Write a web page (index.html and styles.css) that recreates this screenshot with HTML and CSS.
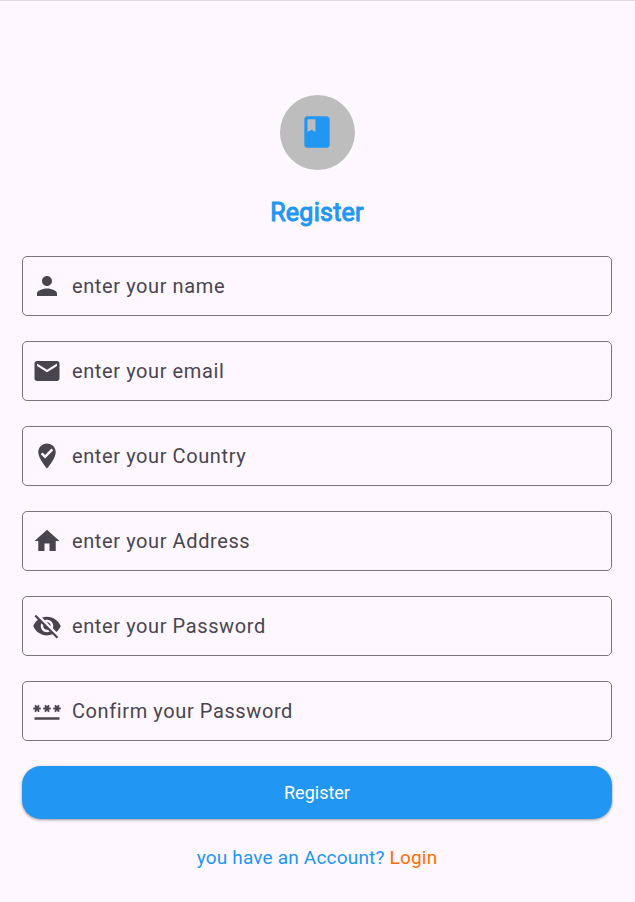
FILE: index.html
```html
<!DOCTYPE html>
<html lang="en">
<head>
<meta charset="utf-8">
<meta name="viewport" content="width=device-width, initial-scale=1">
<title>Register</title>
<link rel="stylesheet" href="styles.css">
</head>
<body>
<main class="page">
  <div class="logo">
    <svg viewBox="0 0 24 24" aria-hidden="true"><path d="M18 2H6c-1.100 0-2 .9-2 2v16c0 1.100.9 2 2 2h12c1.100 0 2-.9 2-2V4c0-1.100-.9-2-2-2zM6 4h5v8l-2.500-1.500L6 12V4z"/></svg>
  </div>
  <h1 class="title">Register</h1>
  <form class="form">
    <label class="field">
      <svg class="icon" viewBox="0 0 24 24" aria-hidden="true"><path d="M12 12c2.210 0 4-1.790 4-4s-1.790-4-4-4-4 1.790-4 4 1.790 4 4 4zm0 2c-2.670 0-8 1.340-8 4v2h16v-2c0-2.660-5.330-4-8-4z"/></svg>
      <input class="input" type="text" aria-label="Name" placeholder="enter your name">
    </label>
    <label class="field">
      <svg class="icon" viewBox="0 0 24 24" aria-hidden="true"><path d="M20 4H4c-1.100 0-1.990.9-1.990 2L2 18c0 1.100.9 2 2 2h16c1.100 0 2-.9 2-2V6c0-1.100-.9-2-2-2zm0 4l-8 5-8-5V6l8 5 8-5v2z"/></svg>
      <input class="input" type="email" aria-label="Email" placeholder="enter your email">
    </label>
    <label class="field">
      <svg class="icon" viewBox="0 0 24 24" aria-hidden="true"><path d="M12 2C8.140 2 5 5.140 5 9c0 5.250 7 13 7 13s7-7.750 7-13c0-3.860-3.140-7-7-7zm-1.530 12l-3.480-3.480 1.410-1.410 2.070 2.060 5.130-5.140 1.410 1.420L10.470 14z"/></svg>
      <input class="input" type="text" aria-label="Country" placeholder="enter your Country">
    </label>
    <label class="field">
      <svg class="icon" viewBox="0 0 24 24" aria-hidden="true"><path d="M10 20v-6h4v6h5v-8h3L12 3 2 12h3v8z"/></svg>
      <input class="input" type="text" aria-label="Address" placeholder="enter your Address">
    </label>
    <label class="field">
      <svg class="icon" viewBox="0 0 24 24" aria-hidden="true"><path d="M12 7c2.760 0 5 2.240 5 5 0 .65-.13 1.260-.36 1.830l2.920 2.920c1.510-1.260 2.700-2.890 3.430-4.750-1.730-4.390-6-7.500-11-7.500-1.400 0-2.740.25-3.980.7l2.160 2.160C10.740 7.130 11.350 7 12 7zM2 4.270l2.280 2.280.46.46C3.080 8.300 1.780 10.020 1 12c1.730 4.390 6 7.500 11 7.500 1.550 0 3.030-.3 4.380-.84l.42.42L19.730 22 21 20.730 3.270 3 2 4.270zM7.530 9.800l1.550 1.550c-.05.21-.08.43-.08.65 0 1.660 1.340 3 3 3 .22 0 .44-.03.65-.08l1.550 1.550c-.67.33-1.410.53-2.200.53-2.760 0-5-2.240-5-5 0-.79.2-1.530.53-2.200zm4.310-.78l3.150 3.150.02-.16c0-1.660-1.340-3-3-3l-.17.01z"/></svg>
      <input class="input" type="password" aria-label="Password" placeholder="enter your Password">
    </label>
    <label class="field">
      <svg class="icon" viewBox="0 0 24 24" aria-hidden="true"><path d="M2 17h20v2H2v-2zm1.150-4.050L4 11.470l.85 1.480 1.300-.75-.85-1.480H7v-1.500H5.300l.85-1.470L4.850 7 4 8.470 3.150 7l-1.300.75.85 1.470H1v1.500h1.700l-.85 1.480 1.300.75zm6.700-.75l1.300.75.85-1.480.85 1.480 1.300-.75-.85-1.480H15v-1.500h-1.700l.85-1.470-1.300-.75L12 8.470 11.150 7l-1.300.75.85 1.470H9v1.500h1.700l-.85 1.480zM23 9.220h-1.700l.85-1.470-1.300-.75L20 8.470 19.150 7l-1.300.75.85 1.470H17v1.500h1.700l-.85 1.480 1.300.75.85-1.480.85 1.480 1.300-.75-.85-1.480H23v-1.500z"/></svg>
      <input class="input" type="password" aria-label="Confirm password" placeholder="Confirm your Password">
    </label>
    <button class="submit" type="submit">Register</button>
  </form>
  <p class="footer">you have an Account? <a class="login" href="#login">Login</a></p>
</main>
</body>
</html>
```
FILE: styles.css
```css
* { box-sizing: border-box; }

body {
  margin: 0;
  background: #fef7ff;
  font-family: Roboto, sans-serif;
}

.page {
  display: flex;
  flex-direction: column;
  align-items: center;
  padding: 94px 23px 24px 22px;
  border-top: 1px solid #dedae0;
}

.logo {
  display: grid;
  place-items: center;
  width: 75px;
  height: 75px;
  padding-bottom: 1px;
  border-radius: 50%;
  background: #bdbdbd;
}

.logo svg {
  width: 38px;
  height: 38px;
  fill: #2196f3;
}

.title {
  margin: 25px 0;
  color: #2196f3;
  font-size: 25px;
  font-weight: 400;
  line-height: 36px;
  letter-spacing: 0.01em;
  -webkit-text-stroke: 1px #2196f3;
}

.form {
  display: flex;
  flex-direction: column;
  gap: 25px;
  width: 100%;
}

.field {
  display: flex;
  align-items: center;
  gap: 10px;
  height: 60px;
  padding: 0 9px;
  border: 1px solid #79747e;
  border-radius: 5px;
}

.icon {
  flex: none;
  width: 30px;
  height: 30px;
  fill: #49454f;
}

.input {
  flex: 1;
  min-width: 0;
  padding: 0;
  border: 0;
  outline: 0;
  background: transparent;
  color: #1d1b20;
  font: 400 20px/30px Roboto, sans-serif;
  letter-spacing: 0.03em;
}

.input::placeholder {
  color: #49454f;
  opacity: 1;
}

.submit {
  height: 53px;
  border: 0;
  border-radius: 19px;
  background: #2196f3;
  box-shadow: 0 1px 3px rgba(0, 0, 0, 0.4);
  color: #fff;
  font: 400 18px/24px Roboto, sans-serif;
}

.footer {
  margin: 26px 0 0;
  color: #2196f3;
  font-size: 19px;
  line-height: 26px;
  letter-spacing: 0.01em;
}

.login {
  color: #ff6d00;
  text-decoration: none;
}
```
